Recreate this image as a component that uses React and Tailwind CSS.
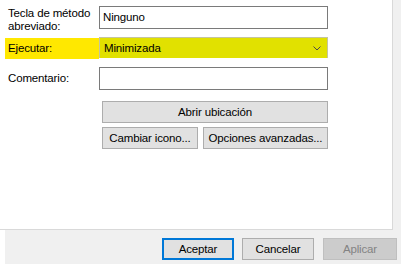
import React from 'react';

// Botón estilo Windows clásico
const WinButton = ({ children, className = '', disabled = false, focused = false }) => (
    <div
        className={`flex items-center justify-center h-[22px] ${focused ? 'border-2 border-[#0078d7]' : 'border border-[#adadad]'} ${disabled ? 'bg-[#cccccc] border-[#bfbfbf] text-[#838383]' : 'bg-[#e1e1e1] text-black'} ${className}`}
    >
        {children}
    </div>
);

const Field = ({ children, className = '' }) => (
    <div className={`flex items-center h-[23px] border border-[#7a7a7a] bg-white pl-[3px] ${className}`}>{children}</div>
);

export default function App() {
    return (
        <div className="w-[401px] h-[264px] bg-white flex flex-col text-[11.5px] leading-[13px] tracking-[-0.15px] text-black overflow-hidden" style={{ fontFamily: '"Liberation Sans", Arial, sans-serif' }}>
            <div className="flex h-[230px]">
                <div className="w-[393px] h-[230px] border-r border-b border-[#d9d9d9] bg-white flex flex-col pt-[6px]">
                    {/* Tecla de método abreviado */}
                    <div className="flex h-[23px]">
                        <div className="w-[99px] pl-[8px] pt-[1px]">
                            Tecla de método
                            <br />
                            abreviado:
                        </div>
                        <Field className="w-[229px]">Ninguno</Field>
                    </div>

                    {/* Ejecutar */}
                    <div className="flex mt-[8px]">
                        <div className="w-[94px] ml-[5px] h-[21px] mt-[1px] bg-[#ffe800] flex items-center pl-[3px]">Ejecutar:</div>
                        <div className="w-[229px] h-[21px] border-t border-l border-r border-[#c4c4a0] bg-[#e1e100] flex items-center justify-between pl-[4px] pr-[6px]">
                            <span>Minimizada</span>
                            <svg width="8" height="5" viewBox="0 0 8 5" fill="none">
                                <polyline points="0.5,0.5 4,4 7.5,0.5" stroke="#4a4a4a" strokeWidth="1" />
                            </svg>
                        </div>
                    </div>

                    {/* Comentario */}
                    <div className="flex mt-[8px]">
                        <div className="w-[99px] pl-[8px] flex items-center">Comentario:</div>
                        <Field className="w-[229px]" />
                    </div>

                    {/* Botones */}
                    <div className="flex flex-col gap-[4px] mt-[11px] ml-[102px] w-[226px]">
                        <WinButton className="w-[226px]">Abrir ubicación</WinButton>
                        <div className="flex gap-[5px]">
                            <WinButton className="w-[96px]">Cambiar icono...</WinButton>
                            <WinButton className="w-[125px]">Opciones avanzadas...</WinButton>
                        </div>
                    </div>
                </div>
                <div className="flex-1 bg-[#f0f0f0]" />
            </div>

            <div className="flex h-[34px]">
                <div className="w-[5px] bg-white" />
                <div className="flex-1 bg-[#f0f0f0] flex items-start pt-[8px] pl-[157px] gap-[8px]">
                    <WinButton focused className="w-[72px]">Aceptar</WinButton>
                    <WinButton className="w-[72px]">Cancelar</WinButton>
                    <WinButton disabled className="w-[74px] ml-[1px]">Aplicar</WinButton>
                </div>
            </div>
        </div>
    );
}
